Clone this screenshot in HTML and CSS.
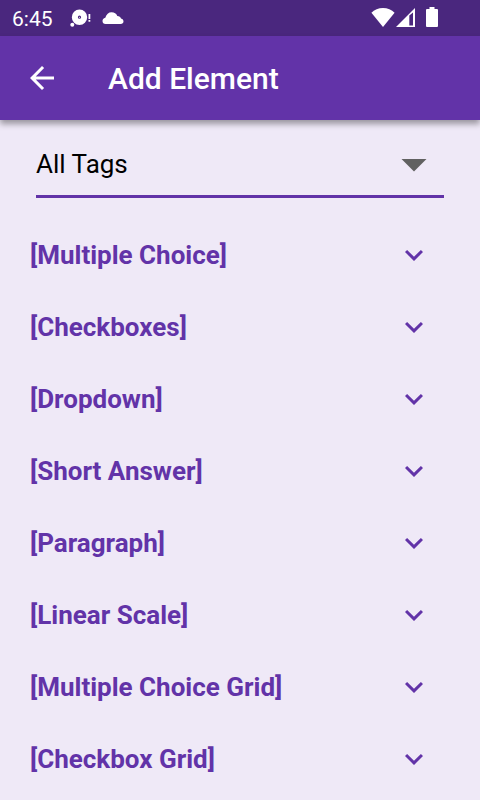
FILE: index.html
```html
<!DOCTYPE html>
<html lang="en">
<head>
<meta charset="utf-8">
<meta name="viewport" content="width=device-width, initial-scale=1">
<title>Add Element</title>
<link rel="stylesheet" href="styles.css">
</head>
<body>
<svg class="symbols" aria-hidden="true">
  <symbol id="chevron" viewBox="0 0 24 24"><path d="M16.59 8.59L12 13.17 7.41 8.59 6 10l6 6 6-6z"/></symbol>
</svg>
<div class="status-bar">
  <span class="clock">6:45</span>
  <svg class="status-disc" viewBox="0 0 22 20" aria-hidden="true">
    <path fill-rule="evenodd" d="M9.500 1.500a7.700 7.700 0 1 1 0 15.400a7.700 7.700 0 0 1 0-15.400zM9.500 7.600a1.600 1.600 0 1 0 0 3.200a1.600 1.600 0 0 0 0-3.200z"/>
    <circle cx="9.500" cy="9.200" r=".5"/>
    <circle cx="2.300" cy="16.800" r="2"/>
    <path d="M18.500 6h1.800v5h-1.800zM18.500 12h1.800v1.800h-1.800z"/>
  </svg>
  <svg class="status-cloud" viewBox="0 0 22 12" aria-hidden="true">
    <path d="M3.500 12C1.700 12 .5 10.700.5 9c0-1.500.9-2.800 2.800-3.200C4.300 2.300 6.600.3 9.500.3c3 0 4.800 1.300 5.800 3.600c2 0 3.300 1 3.700 2.500C20.700 6.800 21.500 8 21.500 9.300c0 1.700-1.200 2.700-2.800 2.700z"/>
  </svg>
  <div class="system-icons">
    <svg class="wifi" viewBox="0 0 24 20" aria-hidden="true"><path d="M12 20L.4 5.700C3.300 2.700 7.500 1 12 1s8.700 1.700 11.600 4.700z"/></svg>
    <svg class="signal" viewBox="0 0 20 20" aria-hidden="true"><path fill-rule="evenodd" d="M0 20L19 1v19zM13.300 8.500v10H17V5.500z"/></svg>
    <svg class="battery" viewBox="0 0 12 20" aria-hidden="true"><path d="M3.500 0h5v2H11q1 0 1 1v16q0 1-1 1H1q-1 0-1-1V3q0-1 1-1h2.500z"/></svg>
  </div>
</div>
<header class="app-bar">
  <button class="back" type="button" aria-label="Back">
    <svg class="icon" viewBox="0 0 24 24" aria-hidden="true"><path d="M20 11H7.830l5.590-5.590L12 4l-8 8 8 8 1.410-1.410L7.830 13H20z"/></svg>
  </button>
  <h1 class="title">Add Element</h1>
</header>
<main>
  <div class="filter">
    <select class="filter-select" aria-label="Tag filter">
      <option>All Tags</option>
    </select>
    <svg class="filter-arrow" viewBox="0 0 26 13" aria-hidden="true"><path d="M.5 0h25L13 12.500z"/></svg>
  </div>
  <ul class="elements">
    <li><button class="element" type="button">[Multiple Choice]<svg class="icon" aria-hidden="true"><use href="#chevron"/></svg></button></li>
    <li><button class="element" type="button">[Checkboxes]<svg class="icon" aria-hidden="true"><use href="#chevron"/></svg></button></li>
    <li><button class="element" type="button">[Dropdown]<svg class="icon" aria-hidden="true"><use href="#chevron"/></svg></button></li>
    <li><button class="element" type="button">[Short Answer]<svg class="icon" aria-hidden="true"><use href="#chevron"/></svg></button></li>
    <li><button class="element" type="button">[Paragraph]<svg class="icon" aria-hidden="true"><use href="#chevron"/></svg></button></li>
    <li><button class="element" type="button">[Linear Scale]<svg class="icon" aria-hidden="true"><use href="#chevron"/></svg></button></li>
    <li><button class="element" type="button">[Multiple Choice Grid]<svg class="icon" aria-hidden="true"><use href="#chevron"/></svg></button></li>
    <li><button class="element" type="button">[Checkbox Grid]<svg class="icon" aria-hidden="true"><use href="#chevron"/></svg></button></li>
  </ul>
</main>
</body>
</html>
```
FILE: styles.css
```css
* {
  box-sizing: border-box;
}

body {
  margin: 0;
  background: #efe9f7;
  color: #000;
  font-family: Roboto, "Liberation Sans", sans-serif;
}

button,
select {
  margin: 0;
  padding: 0;
  border: 0;
  background: none;
  color: inherit;
  font: inherit;
}

svg {
  display: block;
  flex: none;
  fill: currentColor;
}

.symbols {
  display: none;
}

.icon {
  width: 36px;
  height: 36px;
}

.status-bar {
  display: flex;
  align-items: center;
  height: 36px;
  padding: 0 42px 0 12px;
  background: #4a277e;
  color: #fff;
}

.clock {
  font-size: 21px;
  line-height: 36px;
  padding-top: 2px;
}

.status-disc {
  width: 22px;
  height: 20px;
  margin-left: 17px;
}

.status-cloud {
  width: 22px;
  height: 12px;
  margin-left: 10px;
}

.system-icons {
  display: flex;
  align-items: center;
  margin-left: auto;
  padding-bottom: 2px;
}

.wifi {
  width: 24px;
  height: 20px;
}

.signal {
  width: 20px;
  height: 20px;
  margin-left: 1px;
}

.battery {
  width: 12px;
  height: 20px;
  margin-left: 10px;
}

.app-bar {
  display: flex;
  align-items: center;
  height: 84px;
  padding: 0 24px;
  background: #6233a8;
  color: #fff;
  box-shadow: 0 4px 6px rgba(0, 0, 0, 0.36);
}

.title {
  margin: 0 0 0 48px;
  padding-top: 2px;
  font-size: 30px;
  font-weight: 500;
  line-height: 36px;
}

.filter {
  position: relative;
  margin: 12px 36px 0;
}

.filter-select {
  display: block;
  width: 100%;
  height: 66px;
  border-bottom: 3px solid #6233a8;
  border-radius: 0;
  appearance: none;
  font-size: 26px;
}

.filter-arrow {
  position: absolute;
  top: 27px;
  right: 17px;
  width: 26px;
  height: 13px;
  fill: #616161;
  pointer-events: none;
}

.elements {
  margin: 0;
  padding: 21px 0 0;
  list-style: none;
}

.element {
  display: flex;
  align-items: center;
  justify-content: space-between;
  width: 100%;
  height: 72px;
  padding: 0 48px 0 30px;
  color: #6233a8;
  font-size: 26px;
  font-weight: 700;
  text-align: left;
}
```
